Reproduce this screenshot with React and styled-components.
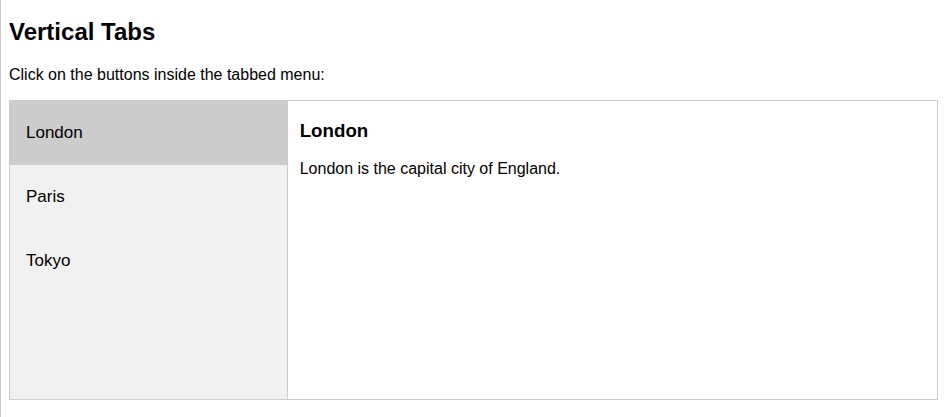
import { useState } from 'react';
import styled, { createGlobalStyle } from 'styled-components';

const cities = [
    { name: 'London', text: 'London is the capital city of England.' },
    { name: 'Paris', text: 'Paris is the capital of France.' },
    { name: 'Tokyo', text: 'Tokyo is the capital of Japan.' },
]

let VerticalTabs = () => {

    let [active, setActive] = useState('London')
    let city = cities.find(c => c.name === active)

    return (
        <>
            <GlobalStyle />
            <Title>Vertical Tabs</Title>
            <Intro>Click on the buttons inside the tabbed menu:</Intro>
            <Wrapper>
                <TabList>
                    {cities.map(c => (
                        <TabButton
                            key={c.name}
                            $active={c.name === active}
                            onClick={() => setActive(c.name)}
                        >
                            {c.name}
                        </TabButton>
                    ))}
                </TabList>
                <TabContent>
                    <CityName>{city.name}</CityName>
                    <CityText>{city.text}</CityText>
                </TabContent>
            </Wrapper>
        </>
    )
}


const GlobalStyle = createGlobalStyle`
    * { box-sizing: border-box; }
    html {
        min-height: 100%;
        border-left: 1px solid #c8c8c8;
    }
    body {
        margin: 8px;
        font-family: "Liberation Sans", Arial, sans-serif;
        color: #000;
        background: #fff;
    }
`

const Title = styled.h2`
    font-size: 24px;
    font-weight: bold;
    margin: 10px 0 19.92px;
`

const Intro = styled.p`
    font-size: 16px;
    margin: 16px 0;
`

const Wrapper = styled.div`
    display: flex;
    height: 300px;
`

const TabList = styled.div`
    width: 30%;
    height: 300px;
    border: 1px solid #ccc;
    background-color: #f1f1f1;
    display: flex;
    flex-direction: column;
`

const TabButton = styled.button`
    display: block;
    width: 100%;
    padding: 22px 16px;
    border: none;
    outline: none;
    text-align: left;
    cursor: pointer;
    font-family: inherit;
    font-size: 17px;
    line-height: normal;
    color: black;
    background-color: ${p => p.$active ? '#ccc' : 'inherit'};
    transition: 0.3s;
    &:hover{
        background-color: ${p => p.$active ? '#ccc' : '#ddd'};
    }
`

const TabContent = styled.div`
    width: 70%;
    height: 300px;
    padding: 0 12px;
    border: 1px solid #ccc;
    border-left: none;
`

const CityName = styled.h3`
    font-size: 18.72px;
    font-weight: bold;
    margin: 18.72px 0;
`

const CityText = styled.p`
    font-size: 16px;
    margin: 16px 0;
`


export default VerticalTabs;
